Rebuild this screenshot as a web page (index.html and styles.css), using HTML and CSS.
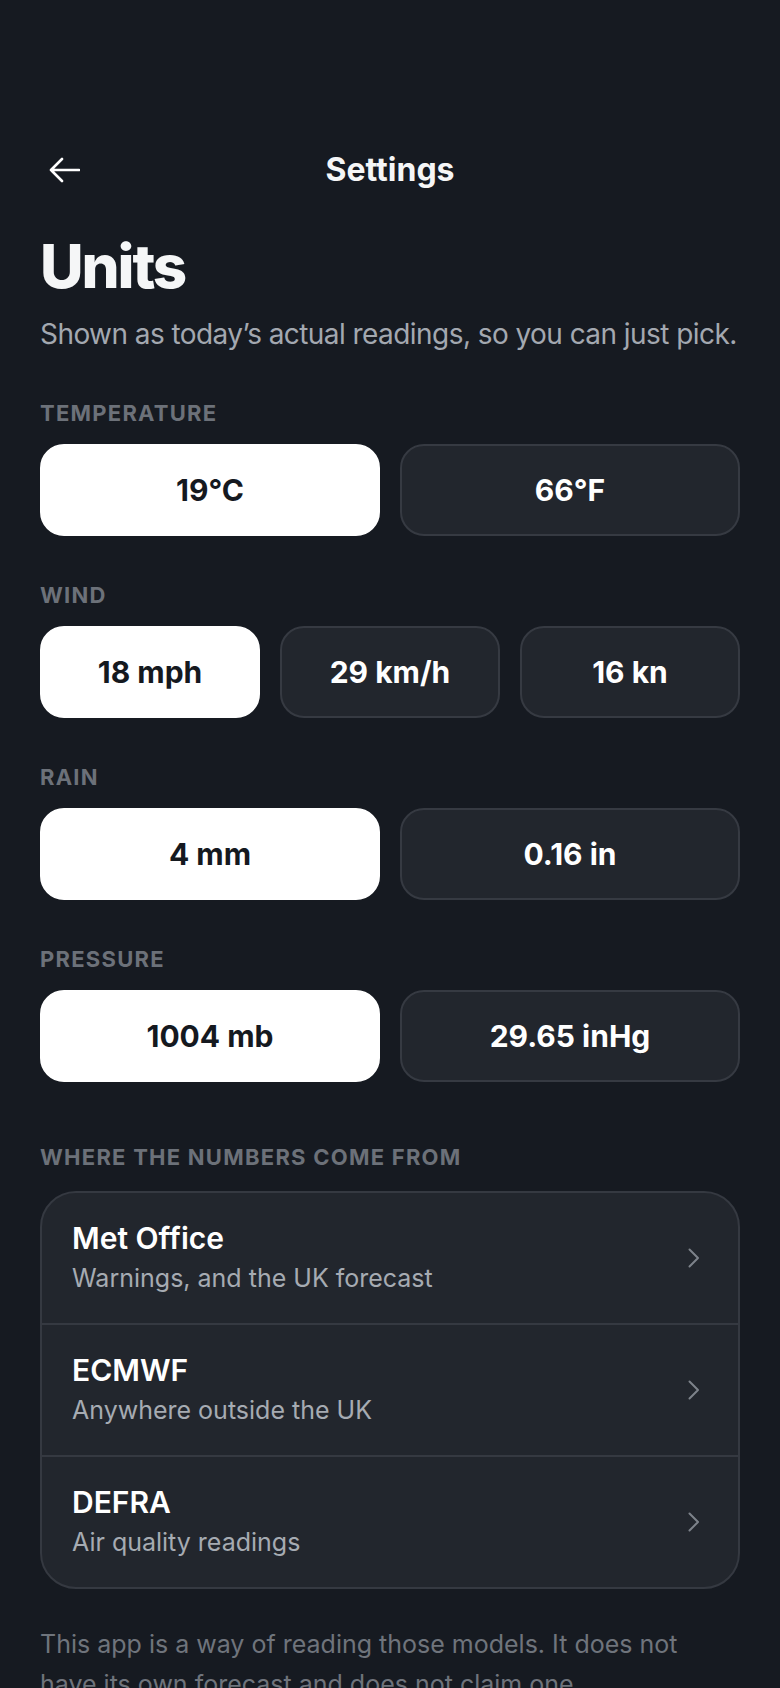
FILE: index.html
```html
<!DOCTYPE html>
<html>
  <head>
    <title>Settings</title>
    <link rel="stylesheet" href="styles.css">
  </head>
  <body>
    <div class="screen">
      <header class="topbar">
        <a class="back" href="#">
          <svg width="32" height="26" viewBox="0 0 32 26"><path d="M31 13H3M14 2L3 13L14 24" fill="none" stroke="#ffffff" stroke-width="2.6" stroke-linecap="round" stroke-linejoin="round"/></svg>
        </a>
        <div class="title">Settings</div>
        <div></div>
      </header>

      <h1>Units</h1>
      <p class="lead">Shown as today&rsquo;s actual readings, so you can just pick.</p>

      <div class="group">
        <div class="label">Temperature</div>
        <div class="options two">
          <div class="opt on">19°C</div>
          <div class="opt">66°F</div>
        </div>
      </div>

      <div class="group">
        <div class="label">Wind</div>
        <div class="options three">
          <div class="opt on">18 mph</div>
          <div class="opt">29 km/h</div>
          <div class="opt">16 kn</div>
        </div>
      </div>

      <div class="group">
        <div class="label">Rain</div>
        <div class="options two">
          <div class="opt on">4 mm</div>
          <div class="opt">0.16 in</div>
        </div>
      </div>

      <div class="group">
        <div class="label">Pressure</div>
        <div class="options two">
          <div class="opt on">1004 mb</div>
          <div class="opt">29.65 inHg</div>
        </div>
      </div>

      <div class="sources">
        <div class="label">Where the numbers come from</div>
        <div class="card">
          <div class="source">
            <div>
              <div class="name">Met Office</div>
              <div class="desc">Warnings, and the UK forecast</div>
            </div>
            <svg width="12" height="20" viewBox="0 0 12 20"><path d="M1.5 1.5L10 10L1.5 18.5" fill="none" stroke="#7d828a" stroke-width="2" stroke-linecap="round" stroke-linejoin="round"/></svg>
          </div>
          <div class="source">
            <div>
              <div class="name">ECMWF</div>
              <div class="desc">Anywhere outside the UK</div>
            </div>
            <svg width="12" height="20" viewBox="0 0 12 20"><path d="M1.5 1.5L10 10L1.5 18.5" fill="none" stroke="#7d828a" stroke-width="2" stroke-linecap="round" stroke-linejoin="round"/></svg>
          </div>
          <div class="source">
            <div>
              <div class="name">DEFRA</div>
              <div class="desc">Air quality readings</div>
            </div>
            <svg width="12" height="20" viewBox="0 0 12 20"><path d="M1.5 1.5L10 10L1.5 18.5" fill="none" stroke="#7d828a" stroke-width="2" stroke-linecap="round" stroke-linejoin="round"/></svg>
          </div>
        </div>
      </div>

      <p class="note">This app is a way of reading those models. It does not have its own forecast and does not claim one.</p>
    </div>
  </body>
</html>
```

FILE: styles.css
```css
body{
    margin:0;
    background:#161a21;
    font-family: Inter, "Noto Sans", sans-serif;
    color:#f5f6f7;
}

.screen{
    padding:130px 40px 0 40px;
}

.topbar{
    height:80px;
    display:grid;
    grid-template-columns:80px 1fr 80px;
    align-items:center;
}
.back{
    display:flex;
    padding-left:8px;
}
.title{
    text-align:center;
    font-size:32px;
    font-weight:700;
    line-height:40px;
}

h1{
    margin:26px 0 0 0;
    font-size:60px;
    line-height:60px;
    font-weight:800;
    letter-spacing:-0.035em;
}
.lead{
    margin:20px -10px 0 0;
    font-size:28px;
    line-height:36px;
    letter-spacing:-0.02em;
    color:#a3a8b0;
}

.label{
    font-size:22px;
    line-height:26px;
    font-weight:700;
    letter-spacing:1.25px;
    text-transform:uppercase;
    color:#6c7179;
    margin-bottom:18px;
}
.group{
    margin-top:46px;
}
.group:first-of-type{
    margin-top:48px;
}

.options{
    display:grid;
    gap:20px;
}
.two{
    grid-template-columns:1fr 1fr;
}
.three{
    grid-template-columns:1fr 1fr 1fr;
}
.opt{
    height:92px;
    box-sizing:border-box;
    border-radius:24px;
    border:2px solid #363a42;
    background:#22262d;
    display:flex;
    align-items:center;
    justify-content:center;
    font-size:30px;
    font-weight:700;
    color:#ffffff;
}
.opt.on{
    background:#ffffff;
    border-color:#ffffff;
    color:#15191f;
}

.sources{
    margin-top:62px;
}
.sources .label{
    margin-bottom:21px;
}
.card{
    border:2px solid #353941;
    border-radius:36px;
    background:#22262d;
    overflow:hidden;
}
.source{
    display:flex;
    align-items:center;
    justify-content:space-between;
    padding:28px 38px 29px 30px;
}
.source + .source{
    border-top:2px solid #353941;
}
.name{
    font-size:30px;
    line-height:35px;
    font-weight:600;
    color:#ffffff;
}
.desc{
    margin-top:6px;
    font-size:25px;
    line-height:32px;
    color:#a6abb2;
}

.note{
    margin:35px 0 0 0;
    font-size:25px;
    line-height:40px;
    color:#6f747c;
}
```
